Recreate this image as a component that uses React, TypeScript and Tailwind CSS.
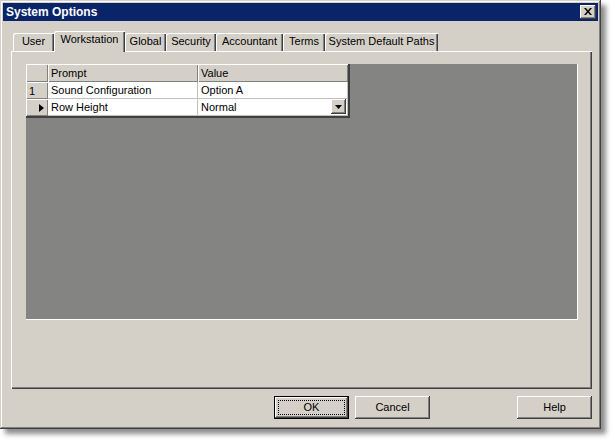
import { ReactNode } from "react";

const raised = "shadow-[inset_-1px_-1px_0_#404040,inset_1px_1px_0_#ffffff,inset_-2px_-2px_0_#808080,inset_2px_2px_0_#d4d0c8]";

type Tab = { label: string, width: string, active?: boolean };

const tabs: Tab[] = [
    { label: "User", width: "w-[41px]" },
    { label: "Workstation", width: "w-[71px]", active: true },
    { label: "Global", width: "w-[41px]" },
    { label: "Security", width: "w-[50px]" },
    { label: "Accountant", width: "w-[67px]" },
    { label: "Terms", width: "w-[42px]" },
    { label: "System Default Paths", width: "w-[113px]" },
];

function TabButton({ label, width, active }: Tab) {
    if (active) {
        return (
            <div className={`${width} relative z-10 h-[21px] -mb-px bg-[#d4d0c8] rounded-tl-[2px] shadow-[inset_1px_1px_0_#ffffff,inset_-1px_0_0_#404040,inset_-2px_0_0_#808080] flex items-start justify-center pt-[3px]`}>
                {label}
            </div>
        );
    }
    return (
        <div className={`${width} mt-[2px] h-[18px] bg-[#d4d0c8] rounded-tl-[2px] shadow-[inset_1px_1px_0_#ffffff,inset_-1px_0_0_#404040,inset_-2px_0_0_#808080] flex items-start justify-center pt-[3px]`}>
            {label}
        </div>
    );
}

function HeaderCell({ children, width }: { children?: ReactNode, width: string }) {
    return (
        <div className={`${width} h-full bg-[#d4d0c8] shadow-[inset_1px_1px_0_#ffffff,inset_-1px_-1px_0_#808080] flex items-center pl-[3px] pt-px`}>
            {children}
        </div>
    );
}

function DataCell({ children, width }: { children?: ReactNode, width: string }) {
    return (
        <div className={`${width} h-full bg-white border-r border-b border-[#c0c0c0] flex items-center pl-[3px] relative`}>
            {children}
        </div>
    );
}

function WinButton({ label, focused }: { label: string, focused?: boolean }) {
    if (focused) {
        return (
            <div className="w-[75px] h-[23px] border border-black bg-[#d4d0c8] flex">
                <div className={`flex-1 ${raised} p-[3px] flex`}>
                    <div className="flex-1 border border-dotted border-black flex items-center justify-center">{label}</div>
                </div>
            </div>
        );
    }
    return (
        <div className={`w-[75px] h-[23px] bg-[#d4d0c8] ${raised} flex items-center justify-center`}>
            {label}
        </div>
    );
}

export default function App() {
    return (
        <div className="w-[615px] h-[443px] bg-white font-['Liberation_Sans',Arial,sans-serif] text-[11px] text-black leading-none">
            <div className="w-[601px] h-[429px] bg-[#d4d0c8] p-[3px] flex flex-col shadow-[inset_-1px_-1px_0_#404040,inset_1px_1px_0_#d4d0c8,inset_-2px_-2px_0_#808080,inset_2px_2px_0_#ffffff,5px_5px_5px_rgba(0,0,0,0.45)]">
                <div className="h-[18px] bg-[#0a246a] flex items-center pl-[3px] pr-[2px]">
                    <div className="text-white font-bold text-[12px]">System Options</div>
                    <div className={`ml-auto w-[16px] h-[14px] bg-[#d4d0c8] ${raised} flex items-center justify-center`}>
                        <svg width="8" height="7" viewBox="0 0 8 7" className="-mt-px">
                            <path d="M0 0h2l2 2.5L6 0h2L5 3.5 8 7H6L4 4.5 2 7H0l3-3.5z" fill="#000" />
                        </svg>
                    </div>
                </div>
                <div className="flex-1 flex flex-col pl-[8px] pr-[6px] pt-[10px]">
                    <div className="flex pl-[2px] h-[20px]">
                        {tabs.map(t => <TabButton key={t.label} {...t} />)}
                    </div>
                    <div className="h-[338px] flex flex-col pl-[15px] pr-[14px] pt-[13px] shadow-[inset_1px_1px_0_#ffffff,inset_-1px_-1px_0_#404040,inset_-2px_-2px_0_#808080]">
                        <div className="h-[256px] bg-[#848482] border-r border-b border-white">
                            <div className="w-[324px] border-r-2 border-b-2 border-[#404040]">
                                <div className="flex h-[18px]">
                                    <HeaderCell width="w-[22px]" />
                                    <HeaderCell width="w-[150px]">Prompt</HeaderCell>
                                    <HeaderCell width="w-[150px]">Value</HeaderCell>
                                </div>
                                <div className="flex h-[17px]">
                                    <HeaderCell width="w-[22px]">1</HeaderCell>
                                    <DataCell width="w-[150px]">Sound Configuration</DataCell>
                                    <DataCell width="w-[150px]">Option A</DataCell>
                                </div>
                                <div className="flex h-[17px]">
                                    <HeaderCell width="w-[22px]">
                                        <svg width="5" height="8" viewBox="0 0 5 8" className="ml-[10px]">
                                            <path d="M0 0L5 4L0 8z" fill="#000" />
                                        </svg>
                                    </HeaderCell>
                                    <DataCell width="w-[150px]">Row Height</DataCell>
                                    <DataCell width="w-[150px]">
                                        Normal
                                        <div className={`absolute right-[1px] top-0 w-[15px] h-[15px] bg-[#d4d0c8] ${raised} flex items-center justify-center`}>
                                            <svg width="7" height="4" viewBox="0 0 7 4">
                                                <path d="M0 0h7L3.5 4z" fill="#000" />
                                            </svg>
                                        </div>
                                    </DataCell>
                                </div>
                            </div>
                        </div>
                    </div>
                    <div className="flex pt-[7px] pl-[263px] gap-[6px]">
                        <WinButton label="OK" focused />
                        <WinButton label="Cancel" />
                        <div className="ml-auto">
                            <WinButton label="Help" />
                        </div>
                    </div>
                </div>
            </div>
        </div>
    );
}
